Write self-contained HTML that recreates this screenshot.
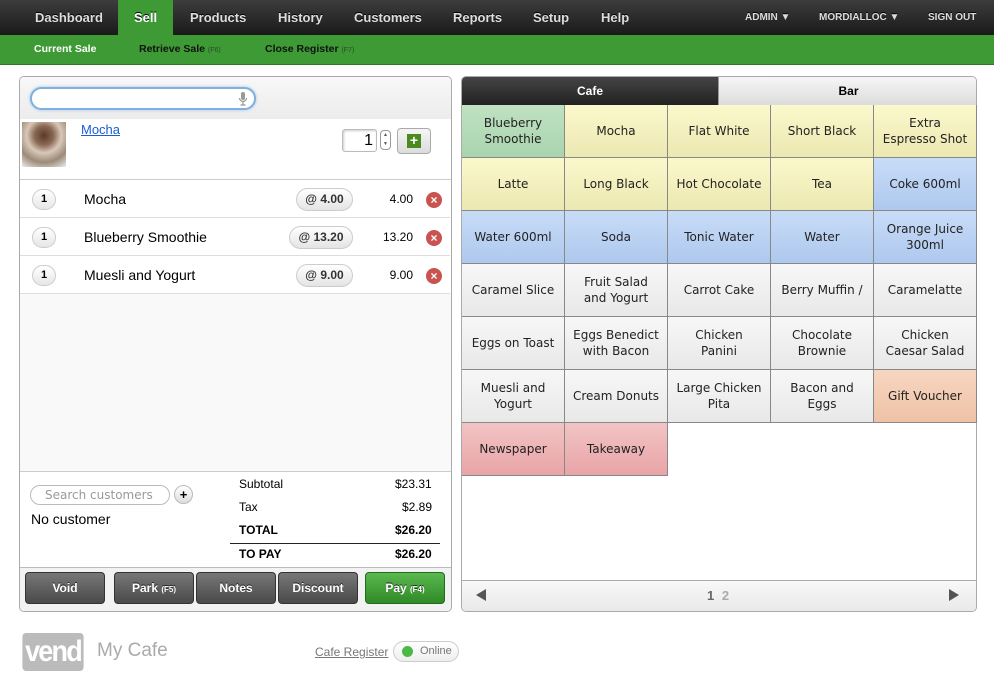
<!DOCTYPE html>
<html><head><meta charset="utf-8"><style>
*{margin:0;padding:0;box-sizing:border-box}
body{width:994px;height:685px;background:#fff;font-family:"Liberation Sans",Arial,sans-serif;position:relative;overflow:hidden}
.a{position:absolute}
#nav{left:0;top:0;width:994px;height:35px;background:linear-gradient(#3d3d3d,#1a1a1a)}
#nav .t{position:absolute;top:0;height:35px;line-height:35px;color:#ddd;font-weight:bold;font-size:13px;text-shadow:0 -1px 0 #000}
#nav .s{font-size:10px}
#sub{left:0;top:35px;width:994px;height:30px;background:#3d9a34;border-bottom:1px solid #2c7a25}
#sub .t{position:absolute;top:0;line-height:29px;font-size:10.5px;font-weight:bold;color:#111}
#sub small{font-size:7px;color:#2c4a2a;font-weight:normal}
.panel{border:1px solid #aaa;border-radius:5px;background:#fff}
.row{left:0;width:430px;height:38px;border-bottom:1px solid #ddd}
.q{left:12px;top:9px;width:24px;height:21px;border:1px solid #ccc;border-radius:11px;background:linear-gradient(#fff,#e6e6e6);font-size:11px;font-weight:bold;text-align:center;line-height:19px}
.nm{left:64px;top:11px;font-size:14px}
.pr{top:8px;height:23px;border:1px solid #ccc;border-radius:12px;background:linear-gradient(#fff,#e4e4e4);font-size:12px;font-weight:bold;text-align:center;line-height:21px;color:#333}
.tot{right:37px;top:12px;font-size:12px}
.x{left:406px;top:12px;width:16px;height:16px;border-radius:8px;background:#c9534f;color:#fff;font-size:12px;line-height:16px;text-align:center;font-weight:bold}
.btn{top:572px;height:32px;border-radius:4px;background:linear-gradient(#777,#4a4a4a);border:1px solid #333;color:#fff;font-weight:bold;font-size:12px;text-align:center;line-height:30px;text-shadow:0 -1px 0 #222}
.btn small{font-size:8px}
.c{position:absolute;width:103px;height:53px;border-right:1px solid #888;border-bottom:1px solid #888;display:flex;align-items:center;justify-content:center;text-align:center;font-family:"DejaVu Sans",sans-serif;font-size:12px;line-height:16px;color:#222;white-space:nowrap}
.y{background:linear-gradient(#fbf8cc,#ece8b2)}
.b{background:linear-gradient(#c8dcf7,#aec8ee)}
.g{background:linear-gradient(#f7f7f7,#e8e8e8)}
.o{background:linear-gradient(#f7d6c0,#efc2a6)}
.p{background:linear-gradient(#f2c4c5,#e9a4a6)}
.gr{background:linear-gradient(#c0e2c2,#a9d4ad)}
.tl{font-size:12px}
</style></head><body>
<div id="nav" class="a">
<div class="a" style="left:118px;top:0;width:55px;height:35px;background:#3d9a34"></div>
<span class="t" style="left:35px">Dashboard</span>
<span class="t" style="left:134px;color:#fff">Sell</span>
<span class="t" style="left:190px">Products</span>
<span class="t" style="left:278px">History</span>
<span class="t" style="left:354px">Customers</span>
<span class="t" style="left:453px">Reports</span>
<span class="t" style="left:533px">Setup</span>
<span class="t" style="left:601px">Help</span>
<span class="t s" style="left:745px">ADMIN ▼</span>
<span class="t s" style="left:819px">MORDIALLOC ▼</span>
<span class="t s" style="left:928px">SIGN OUT</span>
</div>
<div id="sub" class="a">
<span class="t" style="left:34px;color:#fff">Current Sale</span>
<span class="t" style="left:139px">Retrieve Sale <small>(F6)</small></span>
<span class="t" style="left:265px">Close Register <small>(F7)</small></span>
</div>

<div class="a panel" style="left:19px;top:76px;width:433px;height:536px;overflow:hidden">
<div class="a" style="left:0;top:0;width:431px;height:42px;background:linear-gradient(#f8f8f8,#ececec)"></div>
<div class="a" style="left:10px;top:10px;width:226px;height:23px;border:2px solid #7fb0de;border-radius:12px;background:#fff;box-shadow:0 0 3px #9cc4ea"></div>
<svg class="a" style="left:218px;top:14px" width="10" height="16" viewBox="0 0 10 16"><rect x="3" y="1" width="4" height="8" rx="2" fill="#999"/><path d="M1.5 7a3.5 3.5 0 007 0M5 10.5v3M2.5 14h5" stroke="#999" fill="none" stroke-width="1.2"/></svg>
<div class="a" style="left:2px;top:45px;width:44px;height:45px;background:radial-gradient(circle at 50% 30%,#5a3a28 0,#8a6a55 25%,#d8c8b8 45%,#9c8a78 70%,#eee 100%)"></div>
<a class="a" style="left:61px;top:45px;font-size:13px;color:#1a5dd6;text-decoration:underline">Mocha</a>
<div class="a" style="left:322px;top:52px;width:35px;height:23px;border:1px solid #bbb;border-radius:3px;text-align:right;padding-right:3px;font-size:16px;line-height:21px;box-shadow:inset 1px 1px 2px #ccc">1</div>
<div class="a" style="left:360px;top:53px;width:11px;height:20px;border:1px solid #999;border-radius:4px;font-size:5px;text-align:center;line-height:9px;color:#555">▲<br>▼</div>
<div class="a" style="left:377px;top:51px;width:34px;height:26px;border:1px solid #aaa;border-radius:4px;background:linear-gradient(#f6f6f6,#dcdcdc)"><div style="margin:5px auto;width:14px;height:14px;background:#4a8a1e;color:#fff;font-weight:bold;font-size:14px;line-height:13px;text-align:center">+</div></div>
<div class="a" style="left:0;top:102px;width:431px;border-top:1px solid #ccc"></div>
<div class="a row" style="top:103px"><div class="a q">1</div><div class="a nm">Mocha</div><div class="a pr" style="left:276px;width:57px">@ 4.00</div><div class="a tot">4.00</div><div class="a x">×</div></div>
<div class="a row" style="top:141px"><div class="a q">1</div><div class="a nm">Blueberry Smoothie</div><div class="a pr" style="left:269px;width:64px">@ 13.20</div><div class="a tot">13.20</div><div class="a x">×</div></div>
<div class="a row" style="top:179px"><div class="a q">1</div><div class="a nm">Muesli and Yogurt</div><div class="a pr" style="left:276px;width:57px">@ 9.00</div><div class="a tot">9.00</div><div class="a x">×</div></div>
<div class="a" style="left:0;top:217px;width:431px;height:178px;background:#f9f9f9;border-bottom:1px solid #ccc"></div>
<div class="a" style="left:10px;top:408px;width:140px;height:20px;border:1px solid #bbb;border-radius:10px;font-family:'DejaVu Sans',sans-serif;font-size:12px;color:#999;line-height:18px;padding-left:14px">Search customers</div>
<div class="a" style="left:154px;top:408px;width:19px;height:19px;border:1px solid #bbb;border-radius:10px;background:linear-gradient(#fff,#ddd);text-align:center;font-weight:bold;font-size:13px;line-height:17px">+</div>
<div class="a" style="left:11px;top:434px;font-size:14px">No customer</div>
<div class="a tl" style="left:219px;top:400px">Subtotal</div><div class="a tl" style="left:375px;top:400px">$23.31</div>
<div class="a tl" style="left:219px;top:423px">Tax</div><div class="a tl" style="left:382px;top:423px">$2.89</div>
<div class="a tl" style="left:219px;top:446px;font-weight:bold">TOTAL</div><div class="a tl" style="left:375px;top:446px;font-weight:bold">$26.20</div>
<div class="a" style="left:210px;top:466px;width:210px;border-top:1px solid #222"></div>
<div class="a tl" style="left:219px;top:470px;font-weight:bold">TO PAY</div><div class="a tl" style="left:375px;top:470px;font-weight:bold">$26.20</div>
<div class="a" style="left:0;top:490px;width:431px;height:46px;background:#f2f2f2;border-top:1px solid #bbb"></div>
</div>
<div class="a btn" style="left:25px;width:80px">Void</div>
<div class="a btn" style="left:114px;width:80px">Park <small>(F5)</small></div>
<div class="a btn" style="left:196px;width:80px">Notes</div>
<div class="a btn" style="left:278px;width:80px">Discount</div>
<div class="a btn" style="left:365px;width:80px;background:linear-gradient(#5bb84f,#2f8a27);border-color:#236b1d">Pay <small>(F4)</small></div>

<div class="a panel" style="left:461px;top:76px;width:516px;height:536px;overflow:hidden">
<div class="a" style="left:0;top:0;width:256px;height:28px;background:linear-gradient(#444,#222);color:#fff;font-weight:bold;font-size:12px;text-align:center;line-height:28px">Cafe</div>
<div class="a" style="left:256px;top:0;width:260px;height:28px;background:linear-gradient(#f6f6f6,#dcdcdc);border-left:1px solid #999;font-weight:bold;font-size:12px;text-align:center;line-height:28px">Bar</div>
<div class="a" style="left:0;top:28px;width:516px;border-top:1px solid #888"></div>
<div class="a" style="left:0;top:503px;width:516px;height:33px;background:linear-gradient(#f8f8f8,#e8e8e8);border-top:1px solid #aaa"></div>
<div class="a" style="left:14px;top:512px;width:0;height:0;border-top:6px solid transparent;border-bottom:6px solid transparent;border-right:10px solid #555"></div>
<div class="a" style="left:487px;top:512px;width:0;height:0;border-top:6px solid transparent;border-bottom:6px solid transparent;border-left:10px solid #555"></div>
<div class="a" style="left:245px;top:511px;font-size:13px;font-weight:bold;color:#666">1 <span style="color:#aaa;margin-left:4px">2</span></div>
</div>
<div class="a" style="left:462px;top:105px;width:515px;height:371px">
<div class="c gr" style="left:0;top:0">Blueberry<br>Smoothie</div>
<div class="c y" style="left:103px;top:0">Mocha</div>
<div class="c y" style="left:206px;top:0">Flat White</div>
<div class="c y" style="left:309px;top:0">Short Black</div>
<div class="c y" style="left:412px;top:0">Extra<br>Espresso Shot</div>
<div class="c y" style="left:0;top:53px">Latte</div>
<div class="c y" style="left:103px;top:53px">Long Black</div>
<div class="c y" style="left:206px;top:53px">Hot Chocolate</div>
<div class="c y" style="left:309px;top:53px">Tea</div>
<div class="c b" style="left:412px;top:53px">Coke 600ml</div>
<div class="c b" style="left:0;top:106px">Water 600ml</div>
<div class="c b" style="left:103px;top:106px">Soda</div>
<div class="c b" style="left:206px;top:106px">Tonic Water</div>
<div class="c b" style="left:309px;top:106px">Water</div>
<div class="c b" style="left:412px;top:106px">Orange Juice<br>300ml</div>
<div class="c g" style="left:0;top:159px">Caramel Slice</div>
<div class="c g" style="left:103px;top:159px">Fruit Salad<br>and Yogurt</div>
<div class="c g" style="left:206px;top:159px">Carrot Cake</div>
<div class="c g" style="left:309px;top:159px">Berry Muffin /</div>
<div class="c g" style="left:412px;top:159px">Caramelatte</div>
<div class="c g" style="left:0;top:212px">Eggs on Toast</div>
<div class="c g" style="left:103px;top:212px">Eggs Benedict<br>with Bacon</div>
<div class="c g" style="left:206px;top:212px">Chicken<br>Panini</div>
<div class="c g" style="left:309px;top:212px">Chocolate<br>Brownie</div>
<div class="c g" style="left:412px;top:212px">Chicken<br>Caesar Salad</div>
<div class="c g" style="left:0;top:265px">Muesli and<br>Yogurt</div>
<div class="c g" style="left:103px;top:265px">Cream Donuts</div>
<div class="c g" style="left:206px;top:265px">Large Chicken<br>Pita</div>
<div class="c g" style="left:309px;top:265px">Bacon and<br>Eggs</div>
<div class="c o" style="left:412px;top:265px">Gift Voucher</div>
<div class="c p" style="left:0;top:318px">Newspaper</div>
<div class="c p" style="left:103px;top:318px">Takeaway</div>
</div>

<div class="a" style="left:19px;top:633px;width:68px;height:38px;background:#bbb;border-radius:4px;color:#fff;font-weight:bold;font-size:30px;line-height:38px;text-align:center;letter-spacing:-2px;transform:scaleX(0.9)">vend</div>
<div class="a" style="left:97px;top:640px;font-size:19px;color:#aaa">My Cafe</div>
<a class="a" style="left:315px;top:645px;font-size:12px;color:#777;text-decoration:underline">Cafe Register</a>
<div class="a" style="left:393px;top:641px;width:66px;height:21px;border:1px solid #ccc;border-radius:11px;background:linear-gradient(#fff,#eee);font-size:11px;color:#777;line-height:19px;padding-left:26px">Online</div>
<div class="a" style="left:402px;top:646px;width:11px;height:11px;border-radius:6px;background:#4cb944"></div>
</body></html>
